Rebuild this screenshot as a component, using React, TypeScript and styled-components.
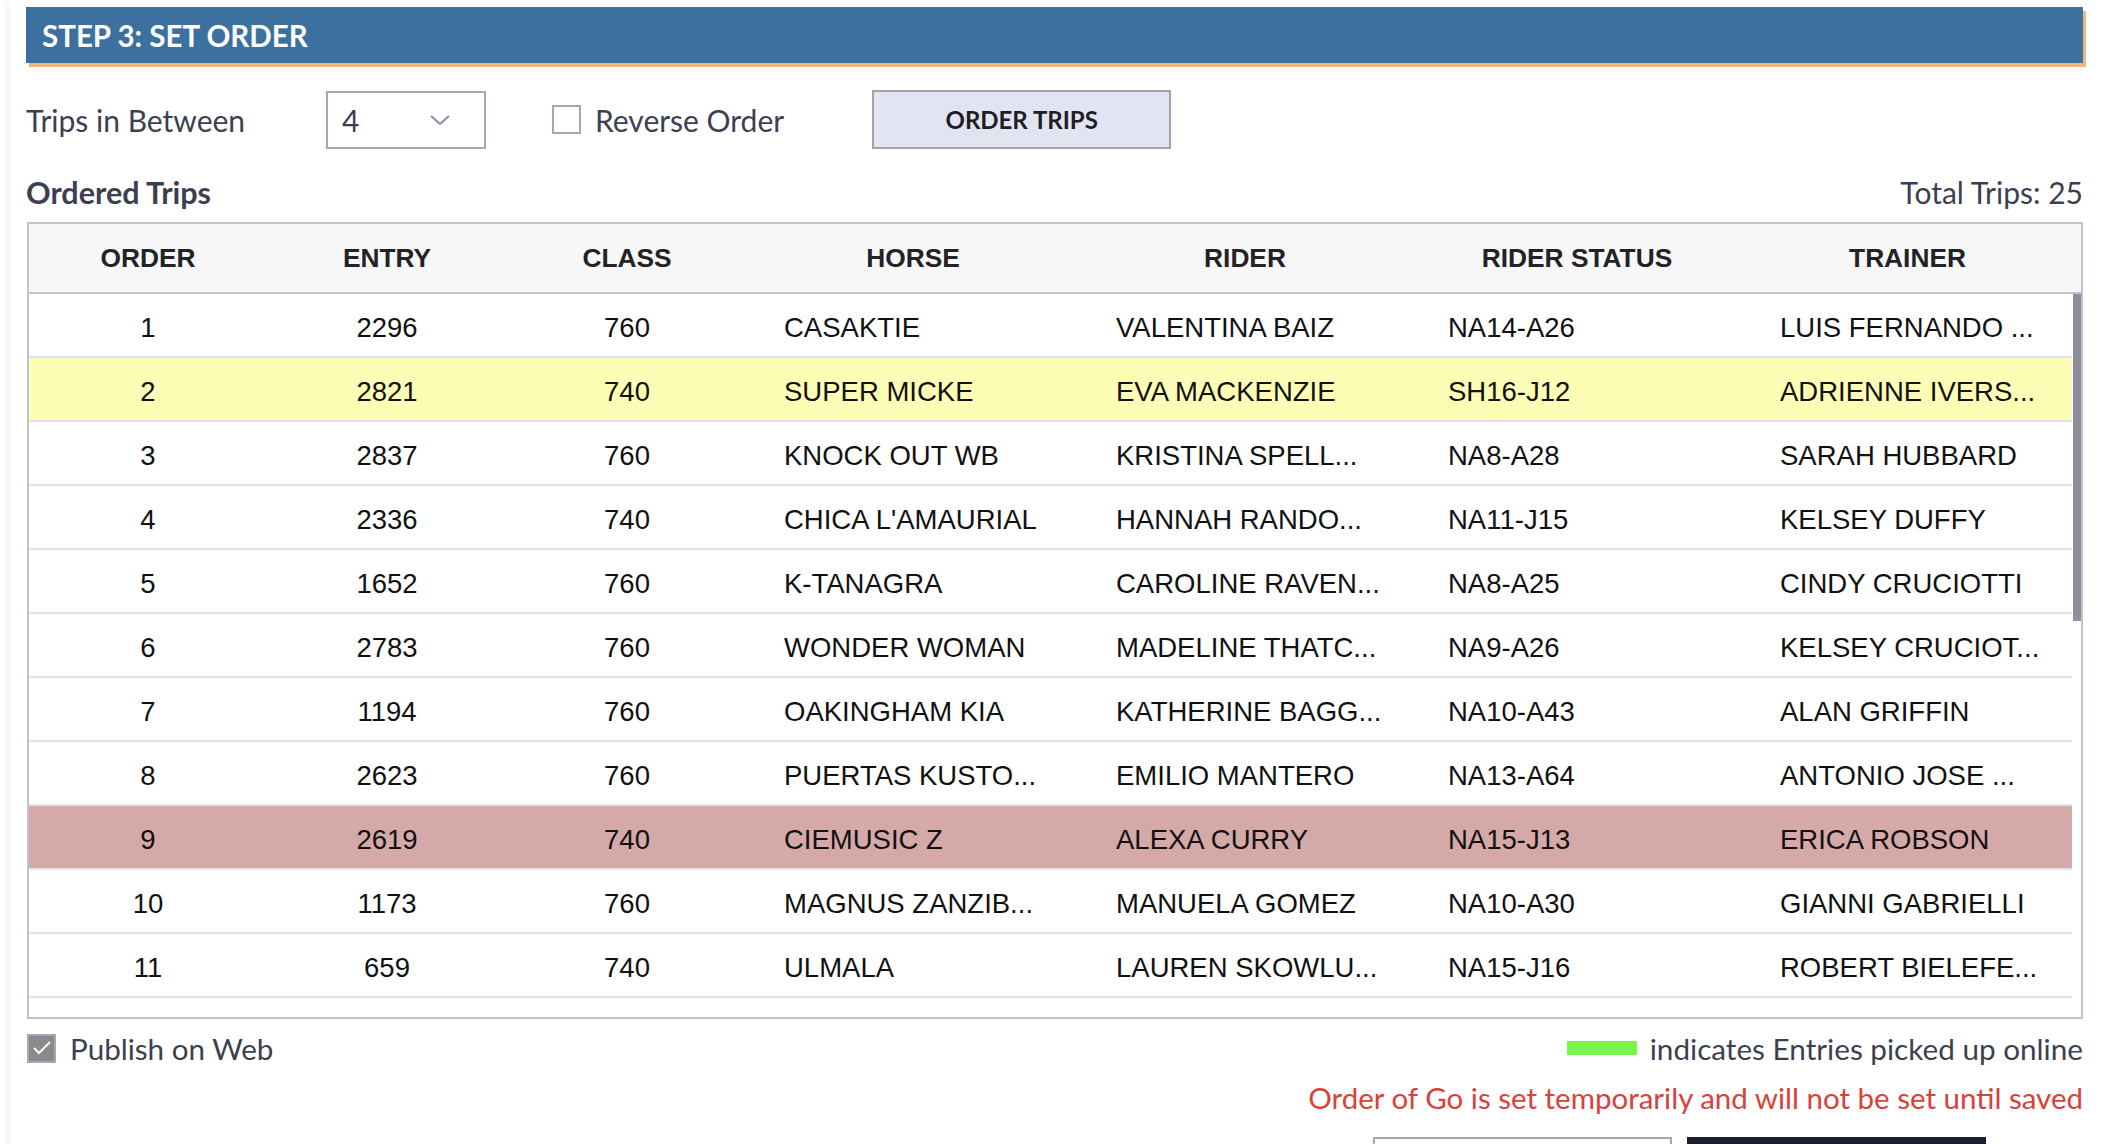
import React from 'react';
import styled, { createGlobalStyle } from 'styled-components';

interface Trip {
  order: number;
  entry: string;
  cls: string;
  horse: string;
  rider: string;
  status: string;
  trainer: string;
  tone?: 'picked' | 'flagged';
}

const trips: Trip[] = [
  { order: 1, entry: '2296', cls: '760', horse: 'CASAKTIE', rider: 'VALENTINA BAIZ', status: 'NA14-A26', trainer: 'LUIS FERNANDO ...' },
  { order: 2, entry: '2821', cls: '740', horse: 'SUPER MICKE', rider: 'EVA MACKENZIE', status: 'SH16-J12', trainer: 'ADRIENNE IVERS...', tone: 'picked' },
  { order: 3, entry: '2837', cls: '760', horse: 'KNOCK OUT WB', rider: 'KRISTINA SPELL...', status: 'NA8-A28', trainer: 'SARAH HUBBARD' },
  { order: 4, entry: '2336', cls: '740', horse: "CHICA L'AMAURIAL", rider: 'HANNAH RANDO...', status: 'NA11-J15', trainer: 'KELSEY DUFFY' },
  { order: 5, entry: '1652', cls: '760', horse: 'K-TANAGRA', rider: 'CAROLINE RAVEN...', status: 'NA8-A25', trainer: 'CINDY CRUCIOTTI' },
  { order: 6, entry: '2783', cls: '760', horse: 'WONDER WOMAN', rider: 'MADELINE THATC...', status: 'NA9-A26', trainer: 'KELSEY CRUCIOT...' },
  { order: 7, entry: '1194', cls: '760', horse: 'OAKINGHAM KIA', rider: 'KATHERINE BAGG...', status: 'NA10-A43', trainer: 'ALAN GRIFFIN' },
  { order: 8, entry: '2623', cls: '760', horse: 'PUERTAS KUSTO...', rider: 'EMILIO MANTERO', status: 'NA13-A64', trainer: 'ANTONIO JOSE ...' },
  { order: 9, entry: '2619', cls: '740', horse: 'CIEMUSIC Z', rider: 'ALEXA CURRY', status: 'NA15-J13', trainer: 'ERICA ROBSON', tone: 'flagged' },
  { order: 10, entry: '1173', cls: '760', horse: 'MAGNUS ZANZIB...', rider: 'MANUELA GOMEZ', status: 'NA10-A30', trainer: 'GIANNI GABRIELLI' },
  { order: 11, entry: '659', cls: '740', horse: 'ULMALA', rider: 'LAUREN SKOWLU...', status: 'NA15-J16', trainer: 'ROBERT BIELEFE...' },
];

const totalTrips = 25;
const bodyHeight = 723;
const rowHeight = 64;

const GlobalStyle = createGlobalStyle`
  html, body {
    margin: 0;
    padding: 0;
    background: #ffffff;
    overflow: hidden;
  }
  * {
    box-sizing: border-box;
  }
`;

const App: React.FC = () => {
  // thumb size follows the share of the 25 trips that fit in the list
  const thumb = Math.round((bodyHeight * bodyHeight) / (totalTrips * rowHeight));

  return (
    <>
      <GlobalStyle />
      <Panel>
        <StepHeader>STEP 3: SET ORDER</StepHeader>

        <Controls>
          <FieldLabel>Trips in Between</FieldLabel>
          <SelectBox>
            <span>4</span>
            <svg width='22' height='12' viewBox='0 0 22 12'>
              <polyline points='2,2 11,10 20,2' fill='none' stroke='#8a8ea2' strokeWidth='2' />
            </svg>
          </SelectBox>
          <ReverseLabel>
            <CheckBox />
            Reverse Order
          </ReverseLabel>
          <OrderButton>ORDER TRIPS</OrderButton>
        </Controls>

        <TitleRow>
          <SectionTitle>Ordered Trips</SectionTitle>
          <TotalText>Total Trips: {totalTrips}</TotalText>
        </TitleRow>

        <TableFrame>
          <HeadRow>
            <HeadCell>ORDER</HeadCell>
            <HeadCell>ENTRY</HeadCell>
            <HeadCell>CLASS</HeadCell>
            <HeadCell>HORSE</HeadCell>
            <HeadCell>RIDER</HeadCell>
            <HeadCell>RIDER STATUS</HeadCell>
            <HeadCell>TRAINER</HeadCell>
          </HeadRow>
          <TableBody>
            <RowList>
              {trips.map((t) => (
                <BodyRow key={t.order} $tone={t.tone}>
                  <Cell $center>{t.order}</Cell>
                  <Cell $center>{t.entry}</Cell>
                  <Cell $center>{t.cls}</Cell>
                  <Cell>{t.horse}</Cell>
                  <Cell>{t.rider}</Cell>
                  <Cell>{t.status}</Cell>
                  <Cell>{t.trainer}</Cell>
                </BodyRow>
              ))}
            </RowList>
            <ScrollTrack>
              <ScrollThumb style={{ height: thumb }} />
            </ScrollTrack>
          </TableBody>
        </TableFrame>

        <FooterRow>
          <CheckLabel>
            <CheckBox $checked>
              <svg width='20' height='16' viewBox='0 0 20 16'>
                <polyline points='2,8 7,13 18,2' fill='none' stroke='#ffffff' strokeWidth='2' />
              </svg>
            </CheckBox>
            Publish on Web
          </CheckLabel>
          <Legend>
            <Swatch />
            indicates Entries picked up online
          </Legend>
        </FooterRow>

        <Warning>Order of Go is set temporarily and will not be set until saved</Warning>

        <Actions>
          <ActionButton>CANCEL</ActionButton>
          <ActionButton $primary>SAVE</ActionButton>
        </Actions>
      </Panel>
    </>
  );
};

export default App;

const uiFont = `Lato, 'Noto Sans', sans-serif`;
const tableFont = `'Liberation Sans', Arial, sans-serif`;

const Panel = styled.div`
  margin-left: 10px;
  padding: 7px 23px 0 16px;
  min-height: 1144px;
  box-shadow: -4px 0 8px rgba(0, 0, 0, 0.05);
  font-family: ${uiFont};
  color: #3c3f51;
`;

const StepHeader = styled.div`
  display: flex;
  align-items: center;
  height: 56px;
  padding-left: 16px;
  background: #3c719f;
  box-shadow: 3px 4px 0 #f2b47c;
  color: #ffffff;
  font-weight: 700;
  font-size: 29.5px;
`;

const Controls = styled.div`
  display: flex;
  align-items: center;
  height: 59px;
  margin-top: 27px;
`;

const FieldLabel = styled.div`
  width: 300px;
  font-size: 30px;
`;

const SelectBox = styled.div`
  display: flex;
  align-items: center;
  justify-content: space-between;
  width: 160px;
  height: 58px;
  padding: 0 33px 0 14px;
  border: 2px solid #a4a8b9;
  font-size: 30px;
`;

const CheckLabel = styled.label`
  display: flex;
  align-items: center;
  gap: 14px;
  font-size: 29.6px;
  color: #3c3f51;
`;

const ReverseLabel = styled(CheckLabel)`
  margin-left: 66px;
  font-size: 30px;
`;

const CheckBox = styled.span<{ $checked?: boolean }>`
  display: inline-flex;
  align-items: center;
  justify-content: center;
  width: 29px;
  height: 29px;
  border: 2px solid #a3a7b8;
  background: ${(p) => (p.$checked ? '#8a8a8c' : '#ffffff')};
`;

const OrderButton = styled.button`
  width: 299px;
  height: 59px;
  margin-left: 88px;
  border: 2px solid #a0a3ab;
  background: #e2e4f2;
  font-family: ${uiFont};
  font-weight: 700;
  font-size: 24px;
  color: #1e1e24;
`;

const TitleRow = styled.div`
  display: flex;
  align-items: center;
  justify-content: space-between;
  height: 36px;
  margin-top: 25px;
  font-size: 30px;
`;

const SectionTitle = styled.div`
  font-weight: 700;
  font-size: 30.5px;
`;

const TotalText = styled.div``;

const TableFrame = styled.div`
  margin-top: 12px;
  margin-left: 1px;
  border: 2px solid #bfc3cc;
  font-family: ${tableFont};
`;

const columns = '238px 240px 240px 332px 332px 332px 1fr';

const HeadRow = styled.div`
  display: grid;
  grid-template-columns: ${columns};
  height: 70px;
  padding-right: 9px;
  background: #f7f7f7;
  border-bottom: 2px solid #c0c4cc;
`;

const HeadCell = styled.div`
  display: flex;
  align-items: center;
  justify-content: center;
  font-weight: 700;
  font-size: 26.3px;
  color: #222326;
`;

const TableBody = styled.div`
  display: flex;
  height: ${bodyHeight}px;
  overflow: hidden;
`;

const RowList = styled.div`
  flex: 1;
`;

const ScrollTrack = styled.div`
  width: 9px;
  background: #ffffff;
`;

const ScrollThumb = styled.div`
  width: 8px;
  margin-left: 1px;
  background: #8f8f9b;
`;

const toneColor = { picked: '#fefdb5', flagged: '#d4a9a8' };

const BodyRow = styled.div<{ $tone?: 'picked' | 'flagged' }>`
  display: grid;
  grid-template-columns: ${columns};
  height: ${rowHeight}px;
  border-bottom: 2px solid #e0e2ea;
  background: ${(p) => (p.$tone ? toneColor[p.$tone] : '#ffffff')};
`;

const Cell = styled.div<{ $center?: boolean }>`
  display: flex;
  align-items: center;
  justify-content: ${(p) => (p.$center ? 'center' : 'flex-start')};
  padding-left: ${(p) => (p.$center ? '0' : '37px')};
  padding-top: 6px;
  font-size: 27.5px;
  color: #111111;
  white-space: nowrap;
  overflow: hidden;
`;

const FooterRow = styled.div`
  display: flex;
  align-items: center;
  justify-content: space-between;
  height: 36px;
  margin-top: 11px;
  padding-left: 1px;
`;

const Legend = styled.div`
  display: flex;
  align-items: center;
  gap: 13px;
  font-size: 29.7px;
`;

const Swatch = styled.span`
  width: 70px;
  height: 14px;
  background: #77f54b;
`;

const Warning = styled.div`
  margin-top: 14px;
  text-align: right;
  font-size: 29.5px;
  line-height: 36px;
  color: #d9413a;
`;

const Actions = styled.div`
  display: flex;
  justify-content: flex-end;
  gap: 15px;
  margin-top: 21px;
  padding-right: 97px;
`;

const ActionButton = styled.button<{ $primary?: boolean }>`
  width: 299px;
  height: 59px;
  border: 2px solid ${(p) => (p.$primary ? '#1b1d33' : '#a3a6ad')};
  background: ${(p) => (p.$primary ? '#1b1d33' : '#ffffff')};
  color: ${(p) => (p.$primary ? '#ffffff' : '#1e1e24')};
  font-family: ${uiFont};
  font-weight: 700;
  font-size: 24px;
`;
